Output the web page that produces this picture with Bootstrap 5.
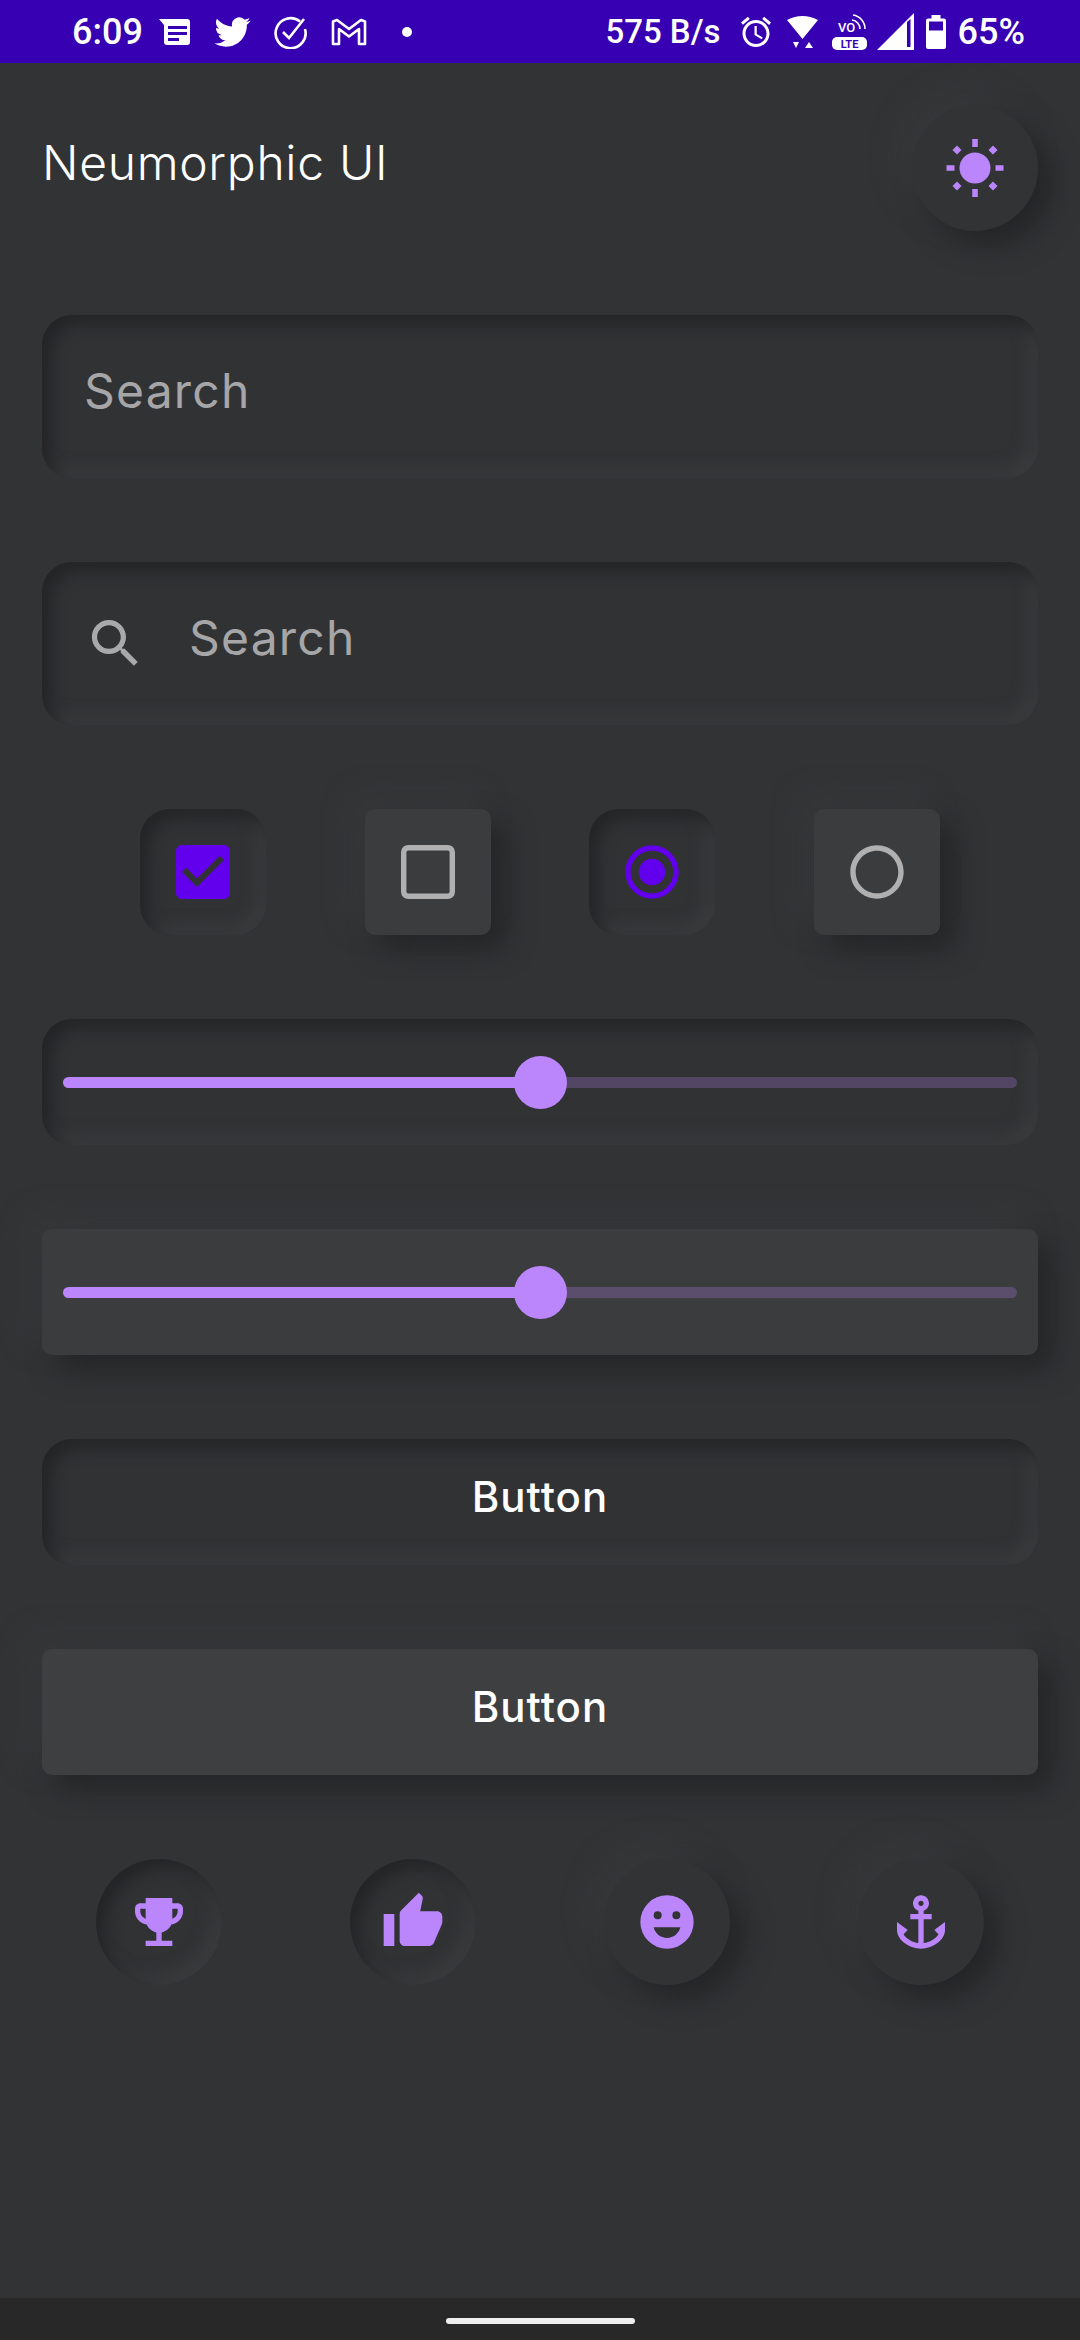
<!DOCTYPE html>
<html lang="en">
<head>
<meta charset="UTF-8">
<meta name="viewport" content="width=device-width, initial-scale=1.0">
<title>Neumorphic UI</title>
<link rel="stylesheet" href="https://cdn.jsdelivr.net/npm/bootstrap@5.3.0/dist/css/bootstrap.min.css">
<style>
    html, body { height: 100%; }
    body { background: #323335; font-family: Inter, "Liberation Sans", sans-serif; color: #fff; }

    .status-strip { height: 63px; background: #3700b3; padding: 0 55px 0 72px; font-family: Roboto, sans-serif; font-size: 36px; font-weight: 500; line-height: 1; }
    .status-strip svg { display: block; fill: #fff; }
    .s-speed { font-size: 33px; }
    .s-news { width: 31px; height: 26px; margin-left: 16px; }
    .s-twitter { width: 37px; height: 30px; margin-left: 24px; }
    .s-task { width: 34px; height: 34px; margin-left: 23px; }
    .s-mail { width: 36px; height: 28px; margin-left: 23px; }
    .s-dot { width: 10px; height: 10px; margin-left: 35px; border-radius: 50%; background: #fff; }
    .s-alarm { width: 36px; height: 36px; margin-left: 17px; }
    .s-wifi { width: 31px; height: 33px; margin-left: 13px; }
    .s-volte { width: 35px; height: 36px; margin-left: 14px; }
    .s-signal { width: 37px; height: 37px; margin-left: 10px; }
    .s-battery { width: 20px; height: 34px; margin-left: 12px; }
    .s-pct { margin-left: 12px; }

    .screen-body { padding: 42px 42px 0; gap: 84px; }
    .app-title { font-size: 48px; font-weight: 300; letter-spacing: .7px; margin: 0; padding-bottom: 10px; }

    .neu-in { background: #313234; box-shadow: inset 9px 9px 15px #242527, inset -9px -9px 15px #3a3b3d; border-radius: 30px; }
    .neu-out { background: #3b3c3e; box-shadow: 14px 14px 28px #242527, -12px -12px 28px #38393b; border-radius: 10px; }
    .neu-flat { background: #323335; box-shadow: 14px 14px 28px #242527, -12px -12px 28px #38393b; }
    .neu-round { border-radius: 50%; }

    .tile { width: 126px; height: 126px; }
    .search-box { height: 163px; padding: 0 42px; }
    .search-box svg { width: 63px; height: 63px; fill: #a9a9a9; margin-right: 42px; }
    .search-input, .search-input:focus { background: transparent; border: 0; box-shadow: none; padding: 0 0 12px; font-size: 48px; font-weight: 400; letter-spacing: 1.200px; color: #fff; }
    .search-input::placeholder { color: #a6a6a8; opacity: 1; }

    .choice-row { padding: 0 98px; }
    .icon-row { padding: 0 54px; }
    .i-box { width: 72px; height: 72px; }
    .i-radio { width: 64px; height: 64px; }
    .i-violet { fill: #6200ee; }
    .i-gray { fill: #b0b0b0; }
    .i-outline { fill: none; stroke: #b0b0b0; stroke-width: 1.800; }
    .i-accent { width: 64px; height: 64px; fill: #bb86fc; }
    .i-sun { width: 60px; height: 60px; fill: #bb86fc; }

    .slider-box { height: 126px; padding: 0 21px; }
    .neu-slider { height: 53px; background: transparent; }
    .neu-slider::-webkit-slider-runnable-track { height: 11px; border-radius: 6px; background: linear-gradient(to right, #bb86fc 50%, rgba(187, 134, 252, .24) 50%); }
    .neu-slider::-webkit-slider-thumb { width: 53px; height: 53px; margin-top: -21px; border-radius: 50%; background: #bb86fc; }

    .neu-btn { height: 126px; padding: 0 0 12px; font-size: 42px; font-weight: 500; letter-spacing: 1px; color: #fff; border: 0; }
    .neu-btn.neu-in { border-radius: 30px; }
    .neu-btn.neu-out { background: #3e3f41; }

    .nav-strip { height: 42px; padding-top: 4px; background: #282828; }
    .nav-pill { width: 189px; height: 6px; border-radius: 3px; background: #eee; }
</style>
</head>
<body class="d-flex flex-column">

<div class="status-strip d-flex align-items-center justify-content-between flex-shrink-0">
    <div class="d-flex align-items-center">
        <span>6:09</span>
        <svg class="s-news" viewBox="0 0 31 26"><path fill-rule="evenodd" d="M0 0H28a3 3 0 0 1 3 3V23a3 3 0 0 1-3 3H8a3 3 0 0 1-3-3V6zM9 7V10H28V7zM9 13V16H28V13zM9 19V22H20V19z"/></svg>
        <svg class="s-twitter" viewBox="0 0 24 20"><path transform="translate(0 -2)" d="M23.953 4.57a10 10 0 01-2.825.775 4.958 4.958 0 002.163-2.723c-.951.555-2.005.959-3.127 1.184a4.92 4.92 0 00-8.384 4.482C7.69 8.095 4.067 6.13 1.64 3.162a4.822 4.822 0 00-.666 2.475c0 1.71.87 3.213 2.188 4.096a4.904 4.904 0 01-2.228-.616v.06a4.923 4.923 0 003.946 4.827 4.996 4.996 0 01-2.212.085 4.936 4.936 0 004.604 3.417 9.867 9.867 0 01-6.102 2.105c-.39 0-.779-.023-1.17-.067a13.995 13.995 0 007.557 2.209c9.053 0 13.998-7.496 13.998-13.985 0-.21 0-.42-.015-.63A9.935 9.935 0 0024 4.59z"/></svg>
        <svg class="s-task" viewBox="0 0 34 34"><path d="M26 6.5A15 15 0 1 0 31 14M9 17l6 6L30 4" fill="none" stroke="#fff" stroke-width="2.6"/></svg>
        <svg class="s-mail" viewBox="0 0 36 28"><path d="M2 3.5 6 2 18 11 30 2 34 3.5V26H28V11L18 18.500 8 11V26H2z" fill="none" stroke="#fff" stroke-width="2.6" stroke-linejoin="round"/></svg>
        <span class="s-dot"></span>
    </div>
    <div class="d-flex align-items-center">
        <span class="s-speed">575 B/s</span>
        <svg class="s-alarm" viewBox="0 0 24 24"><path d="M22 5.72l-4.6-3.86-1.29 1.53 4.6 3.86L22 5.72zM7.88 3.39L6.6 1.86 2 5.71l1.29 1.53 4.59-3.85zM12.5 8H11v6l4.75 2.85.75-1.23-4-2.37V8zM12 4c-4.97 0-9 4.03-9 9s4.03 9 9 9 9-4.03 9-9-4.03-9-9-9zm0 16c-3.87 0-7-3.13-7-7s3.13-7 7-7 7 3.13 7 7-3.13 7-7 7z"/></svg>
        <svg class="s-wifi" viewBox="0 0 31 33"><path d="M0 5Q15.500-3 31 5L15.500 24zM6 27H12L9 33zM22 27 26 33H18z"/></svg>
        <svg class="s-volte" viewBox="0 0 35 36"><text x="6" y="18" font-family="Roboto, sans-serif" font-size="13" font-weight="500" fill="#fff">VO</text><path d="M20 6a9 9 0 0 1 8 9M21 1a14 14 0 0 1 12 14" fill="none" stroke="#fff" stroke-width="1.600"/><rect y="23" width="35" height="13" rx="5"/><text x="17.500" y="33.500" text-anchor="middle" font-family="Roboto, sans-serif" font-size="11" font-weight="700" fill="#3700b3">LTE</text></svg>
        <svg class="s-signal" viewBox="0 0 37 37"><path fill-rule="evenodd" d="M0 37 37 0V37zM30 9V34H33.500V6z"/></svg>
        <svg class="s-battery" viewBox="0 0 20 34"><path fill-rule="evenodd" d="M5.500 0H14.500V3.500H18a2 2 0 0 1 2 2V32a2 2 0 0 1-2 2H2a2 2 0 0 1-2-2V5.500a2 2 0 0 1 2-2H5.500zM3 6.500V15.500H17V6.500z"/></svg>
        <span class="s-pct">65%</span>
    </div>
</div>

<main class="screen-body d-flex flex-column flex-grow-1">
    <div class="d-flex align-items-center justify-content-between">
        <h1 class="app-title">Neumorphic UI</h1>
        <div class="tile neu-flat neu-round d-flex align-items-center justify-content-center">
            <svg class="i-sun" viewBox="0 0 60 60"><circle cx="30" cy="30" r="15.500"/><path d="M27.200 1H32.800V9H27.200zM27.200 51H32.800V59H27.200zM1.500 27.200H9.500V32.800H1.500zM50.500 27.200H58.500V32.800H50.500zM12 7.500 16.500 12 12 16.500 7.500 12zM48 7.500 52.500 12 48 16.500 43.500 12zM12 43.500 16.500 48 12 52.500 7.500 48zM48 43.500 52.500 48 48 52.500 43.500 48z"/></svg>
        </div>
    </div>

    <div class="search-box neu-in d-flex align-items-center">
        <input type="text" class="form-control search-input" placeholder="Search">
    </div>

    <div class="search-box neu-in d-flex align-items-center">
        <svg viewBox="0 0 24 24" class="flex-shrink-0"><path d="M15.5 14h-.79l-.28-.27C15.41 12.590 16 11.110 16 9.500 16 5.910 13.090 3 9.500 3S3 5.910 3 9.500 5.910 16 9.500 16c1.610 0 3.090-.59 4.230-1.570l.27.28v.79l5 4.990L20.490 19l-4.990-5zm-6 0C7.010 14 5 11.990 5 9.500S7.010 5 9.500 5 14 7.010 14 9.500 11.990 14 9.500 14z"/></svg>
        <input type="text" class="form-control search-input" placeholder="Search">
    </div>

    <div class="choice-row d-flex justify-content-between">
        <div class="tile neu-in d-flex align-items-center justify-content-center">
            <svg class="i-box i-violet" viewBox="0 0 24 24"><path d="M19 3H5c-1.110 0-2 .9-2 2v14c0 1.100.89 2 2 2h14c1.100 0 2-.9 2-2V5c0-1.100-.89-2-2-2zm-9 14l-5-5 1.410-1.410L10 14.170l7.590-7.590L19 8l-9 9z"/></svg>
        </div>
        <div class="tile neu-out d-flex align-items-center justify-content-center">
            <svg class="i-box" viewBox="0 0 24 24"><rect class="i-outline" x="3.900" y="3.900" width="16.200" height="16.200" rx="1.500"/></svg>
        </div>
        <div class="tile neu-in d-flex align-items-center justify-content-center">
            <svg class="i-radio i-violet" viewBox="0 0 24 24"><path d="M12 7c-2.760 0-5 2.240-5 5s2.240 5 5 5 5-2.240 5-5-2.240-5-5-5zm0-5C6.480 2 2 6.480 2 12s4.480 10 10 10 10-4.480 10-10S17.520 2 12 2zm0 18c-4.420 0-8-3.580-8-8s3.580-8 8-8 8 3.580 8 8-3.580 8-8 8z"/></svg>
        </div>
        <div class="tile neu-out d-flex align-items-center justify-content-center">
            <svg class="i-radio i-gray" viewBox="0 0 24 24"><path d="M12 2C6.480 2 2 6.480 2 12s4.480 10 10 10 10-4.480 10-10S17.520 2 12 2zm0 18c-4.420 0-8-3.580-8-8s3.580-8 8-8 8 3.580 8 8-3.580 8-8 8z"/></svg>
        </div>
    </div>

    <div class="slider-box neu-in d-flex align-items-center">
        <input type="range" class="form-range neu-slider" value="50">
    </div>

    <div class="slider-box neu-out d-flex align-items-center">
        <input type="range" class="form-range neu-slider" value="50">
    </div>

    <button type="button" class="btn neu-btn neu-in w-100">Button</button>
    <button type="button" class="btn neu-btn neu-out w-100">Button</button>

    <div class="icon-row d-flex justify-content-between">
        <div class="tile neu-in neu-round d-flex align-items-center justify-content-center">
            <svg class="i-accent" viewBox="0 0 24 24"><path d="M19 5h-2V3H7v2H5c-1.100 0-2 .9-2 2v1c0 2.550 1.920 4.630 4.390 4.940.63 1.500 1.980 2.630 3.610 2.960V19H7v2h10v-2h-4v-3.100c1.630-.33 2.980-1.460 3.610-2.960C19.080 12.630 21 10.550 21 8V7c0-1.100-.9-2-2-2zM5 8V7h2v3.820C5.840 10.400 5 9.300 5 8zm14 0c0 1.300-.84 2.400-2 2.820V7h2v1z"/></svg>
        </div>
        <div class="tile neu-in neu-round d-flex align-items-center justify-content-center">
            <svg class="i-accent" viewBox="0 0 24 24"><path d="M1 21h4V9H1v12zm22-11c0-1.100-.9-2-2-2h-6.310l.95-4.570.03-.32c0-.41-.17-.79-.44-1.060L14.170 1 7.590 7.590C7.220 7.950 7 8.450 7 9v10c0 1.100.9 2 2 2h9c.83 0 1.540-.5 1.840-1.220l3.020-7.050c.09-.23.14-.47.14-.73v-2z"/></svg>
        </div>
        <div class="tile neu-flat neu-round d-flex align-items-center justify-content-center">
            <svg class="i-accent" viewBox="0 0 24 24"><path fill-rule="evenodd" d="M12 2a10 10 0 1 0 0 20 10 10 0 0 0 0-20zM8.500 8a1.500 1.500 0 1 1 0 3 1.500 1.500 0 0 1 0-3zM15.500 8a1.500 1.500 0 1 1 0 3 1.500 1.500 0 0 1 0-3zM7 14H17C16.500 16.300 14.400 18 12 18S7.500 16.300 7 14z"/></svg>
        </div>
        <div class="tile neu-flat neu-round d-flex align-items-center justify-content-center">
            <svg class="i-accent" viewBox="0 0 24 24"><path d="M17 15l1.550 1.550c-.96 1.690-3.330 3.040-5.550 3.370V11h3V9h-3V7.820C14.160 7.400 15 6.300 15 5c0-1.650-1.350-3-3-3S9 3.350 9 5c0 1.300.84 2.400 2 2.820V9H8v2h3v8.920c-2.220-.33-4.590-1.680-5.550-3.370L7 15l-4-3v3c0 3.880 4.920 7 9 7s9-3.120 9-7v-3l-4 3zM12 4c.55 0 1 .45 1 1s-.45 1-1 1-1-.45-1-1 .45-1 1-1z"/></svg>
        </div>
    </div>
</main>

<div class="nav-strip d-flex justify-content-center align-items-center flex-shrink-0">
    <div class="nav-pill"></div>
</div>

<script src="https://cdn.jsdelivr.net/npm/bootstrap@5.3.0/dist/js/bootstrap.bundle.min.js"></script>
</body>
</html>
